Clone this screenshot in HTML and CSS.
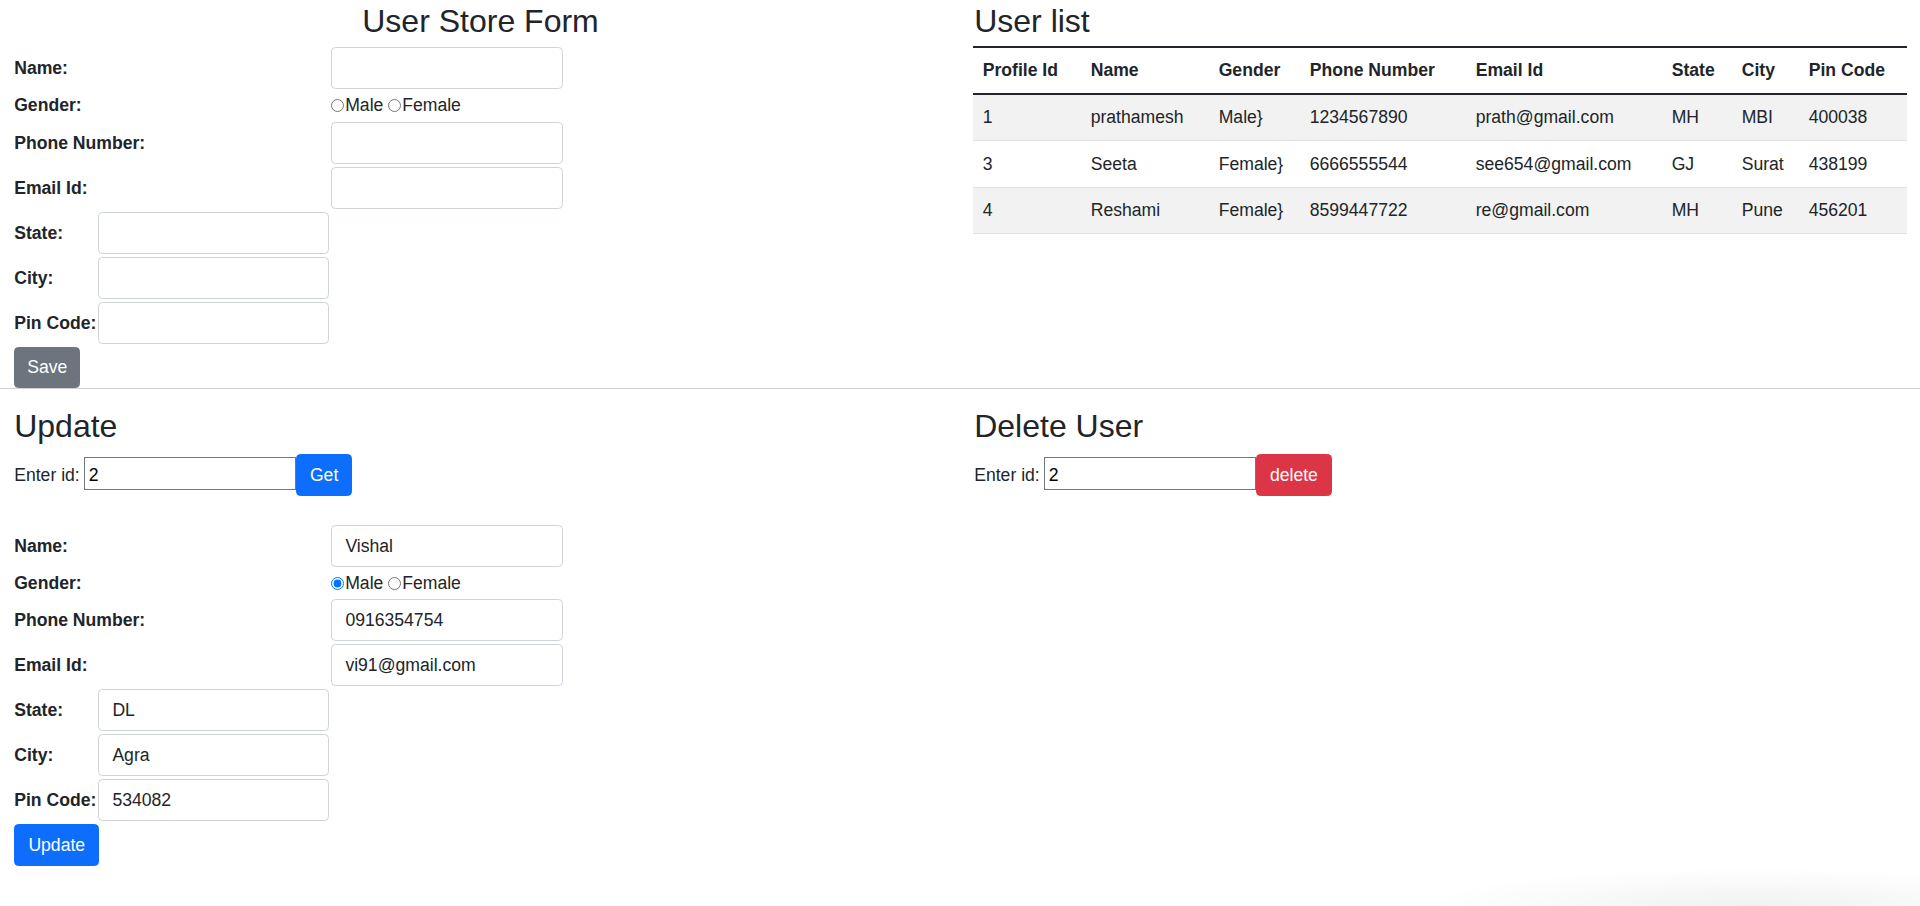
FILE: index.html
```html
<!DOCTYPE html>
<html lang="en">
<head>
<meta charset="utf-8">
<title>User Store</title>
<link rel="stylesheet" href="styles.css">
</head>
<body>
<div class="page">
  <section class="row row-top">
    <div class="col">
      <h2 class="title title-form center">User Store Form</h2>
      <form class="uform">
        <label class="lbl wide">Name:</label>
        <input class="fc c3" type="text">
        <span class="lbl wide">Gender:</span>
        <div class="radios c3"><input class="rad" type="radio" name="g1">Male <input class="rad" type="radio" name="g1">Female</div>
        <label class="lbl wide">Phone Number:</label>
        <input class="fc c3" type="text">
        <label class="lbl wide">Email Id:</label>
        <input class="fc c3" type="text">
        <label class="lbl">State:</label>
        <input class="fc c2" type="text">
        <label class="lbl">City:</label>
        <input class="fc c2" type="text">
        <label class="lbl">Pin Code:</label>
        <input class="fc c2" type="text">
        <button type="button" class="btn btn-secondary btn-cell btn-save">Save</button>
      </form>
    </div>
    <div class="col">
      <h2 class="title title-top">User list</h2>
      <table class="utable">
        <colgroup>
          <col class="w-id"><col class="w-name"><col class="w-gender"><col class="w-phone"><col class="w-email"><col class="w-state"><col class="w-city"><col class="w-pin">
        </colgroup>
        <thead>
          <tr><th>Profile Id</th><th>Name</th><th>Gender</th><th>Phone Number</th><th>Email Id</th><th>State</th><th>City</th><th>Pin Code</th></tr>
        </thead>
        <tbody>
          <tr><td>1</td><td>prathamesh</td><td>Male}</td><td>1234567890</td><td>prath@gmail.com</td><td>MH</td><td>MBI</td><td>400038</td></tr>
          <tr><td>3</td><td>Seeta</td><td>Female}</td><td>6666555544</td><td>see654@gmail.com</td><td>GJ</td><td>Surat</td><td>438199</td></tr>
          <tr><td>4</td><td>Reshami</td><td>Female}</td><td>8599447722</td><td>re@gmail.com</td><td>MH</td><td>Pune</td><td>456201</td></tr>
        </tbody>
      </table>
    </div>
  </section>
  <section class="row row-bottom">
    <div class="col">
      <h2 class="title">Update</h2>
      <div class="idrow">
        <label>Enter id:</label>
        <input class="idinput" type="text" value="2">
        <button type="button" class="btn btn-primary">Get</button>
      </div>
      <form class="uform uform-update">
        <label class="lbl wide">Name:</label>
        <input class="fc c3" type="text" value="Vishal">
        <span class="lbl wide">Gender:</span>
        <div class="radios c3"><input class="rad" type="radio" name="g2" checked>Male <input class="rad" type="radio" name="g2">Female</div>
        <label class="lbl wide">Phone Number:</label>
        <input class="fc c3" type="text" value="0916354754">
        <label class="lbl wide">Email Id:</label>
        <input class="fc c3" type="text" value="vi91@gmail.com">
        <label class="lbl">State:</label>
        <input class="fc c2" type="text" value="DL">
        <label class="lbl">City:</label>
        <input class="fc c2" type="text" value="Agra">
        <label class="lbl">Pin Code:</label>
        <input class="fc c2" type="text" value="534082">
        <button type="button" class="btn btn-primary btn-cell">Update</button>
      </form>
    </div>
    <div class="col">
      <h2 class="title">Delete User</h2>
      <div class="idrow">
        <label>Enter id:</label>
        <input class="idinput" type="text" value="2">
        <button type="button" class="btn btn-danger">delete</button>
      </div>
    </div>
  </section>
</div>
<div class="corner-shade" aria-hidden="true"></div>
</body>
</html>
```

FILE: styles.css
```css
* { box-sizing: border-box; }

html, body {
  margin: 0;
  padding: 0;
  background: #fff;
}

body {
  font-family: "Liberation Sans", Arial, sans-serif;
  font-size: 17.6px;
  line-height: 26.4px;
  color: #212529;
}

.row {
  display: flex;
}

.col {
  flex: 1 1 0;
  min-width: 0;
  padding: 0 13.2px;
}

.row-top {
  padding-top: 2px;
  border-bottom: 1px solid #d3d3d3;
}

.row-bottom {
  padding-top: 18px;
}

.title {
  font-size: 32px;
  font-weight: 500;
  line-height: 1.2;
  margin: 0 0 8.2px;
  padding-left: 1px;
}

.title-top {
  margin-bottom: 6px;
}

.title-form {
  margin-bottom: 7px;
}

.center {
  text-align: center;
}

/* form grid */
.uform {
  display: grid;
  grid-template-columns: 82px 231px 232px;
  column-gap: 2px;
  row-gap: 3px;
  align-items: center;
  padding-left: 1px;
}

.uform-update {
  margin-top: 29.5px;
}

.lbl {
  grid-column: 1;
  font-weight: 700;
  white-space: nowrap;
}

.lbl.wide {
  grid-column: 1 / 3;
}

.c2 { grid-column: 2; }
.c3 { grid-column: 3; }

.fc {
  display: block;
  width: 100%;
  height: 42px;
  padding: 6.6px 13.2px;
  font: inherit;
  color: #212529;
  background: #fff;
  border: 1px solid #ced4da;
  border-radius: 4.4px;
  outline: none;
}

.radios {
  white-space: nowrap;
  line-height: 26.4px;
}

.rad {
  width: 13px;
  height: 13px;
  margin: 0 1px 0 0;
  vertical-align: -1px;
}

/* buttons */
.btn {
  display: inline-block;
  font: inherit;
  line-height: 26.4px;
  padding: 6.6px 13.2px;
  border: 1px solid transparent;
  border-radius: 4.4px;
  color: #fff;
  cursor: pointer;
}

.btn-cell {
  grid-column: 1 / 3;
  justify-self: start;
}

.btn-save {
  padding-left: 12px;
  padding-right: 12px;
}

.btn-secondary { background: #6c757d; border-color: #6c757d; }
.btn-primary { background: #0d6efd; border-color: #0d6efd; }
.btn-danger { background: #dc3545; border-color: #dc3545; }

/* enter id row */
.idrow {
  display: flex;
  align-items: baseline;
  padding-left: 1px;
}

.idrow label {
  margin-right: 4px;
}

.idinput {
  width: 212px;
  height: 33px;
  padding: 4px 4px 0;
  font: inherit;
  color: #000;
  border: 1px solid #767676;
  border-radius: 0;
  background: #fff;
  outline: none;
}

/* table */
.utable {
  width: 100%;
  border-collapse: collapse;
  table-layout: fixed;
  border-top: 2px solid #212529;
}

.w-id { width: 108px; }
.w-name { width: 128px; }
.w-gender { width: 91px; }
.w-phone { width: 166px; }
.w-email { width: 196px; }
.w-state { width: 70px; }
.w-city { width: 67px; }
.w-pin { width: 108px; }

.utable th,
.utable td {
  text-align: left;
  padding: 9.5px 9.5px;
  line-height: 26.4px;
  border-bottom: 1px solid #dee2e6;
  white-space: nowrap;
  overflow: hidden;
}

.utable thead th {
  font-weight: 700;
  padding: 9px 9.5px;
  border-bottom: 2px solid #212529;
}

.utable tbody tr:nth-child(odd) td {
  background: #f2f2f2;
}

/* faint shade in the bottom-right corner */
.corner-shade {
  position: fixed;
  right: 0;
  bottom: 0;
  width: 480px;
  height: 50px;
  pointer-events: none;
  background: radial-gradient(ellipse 90% 100% at 65% 100%, rgba(0,0,0,0.055), rgba(0,0,0,0) 75%);
}
```
